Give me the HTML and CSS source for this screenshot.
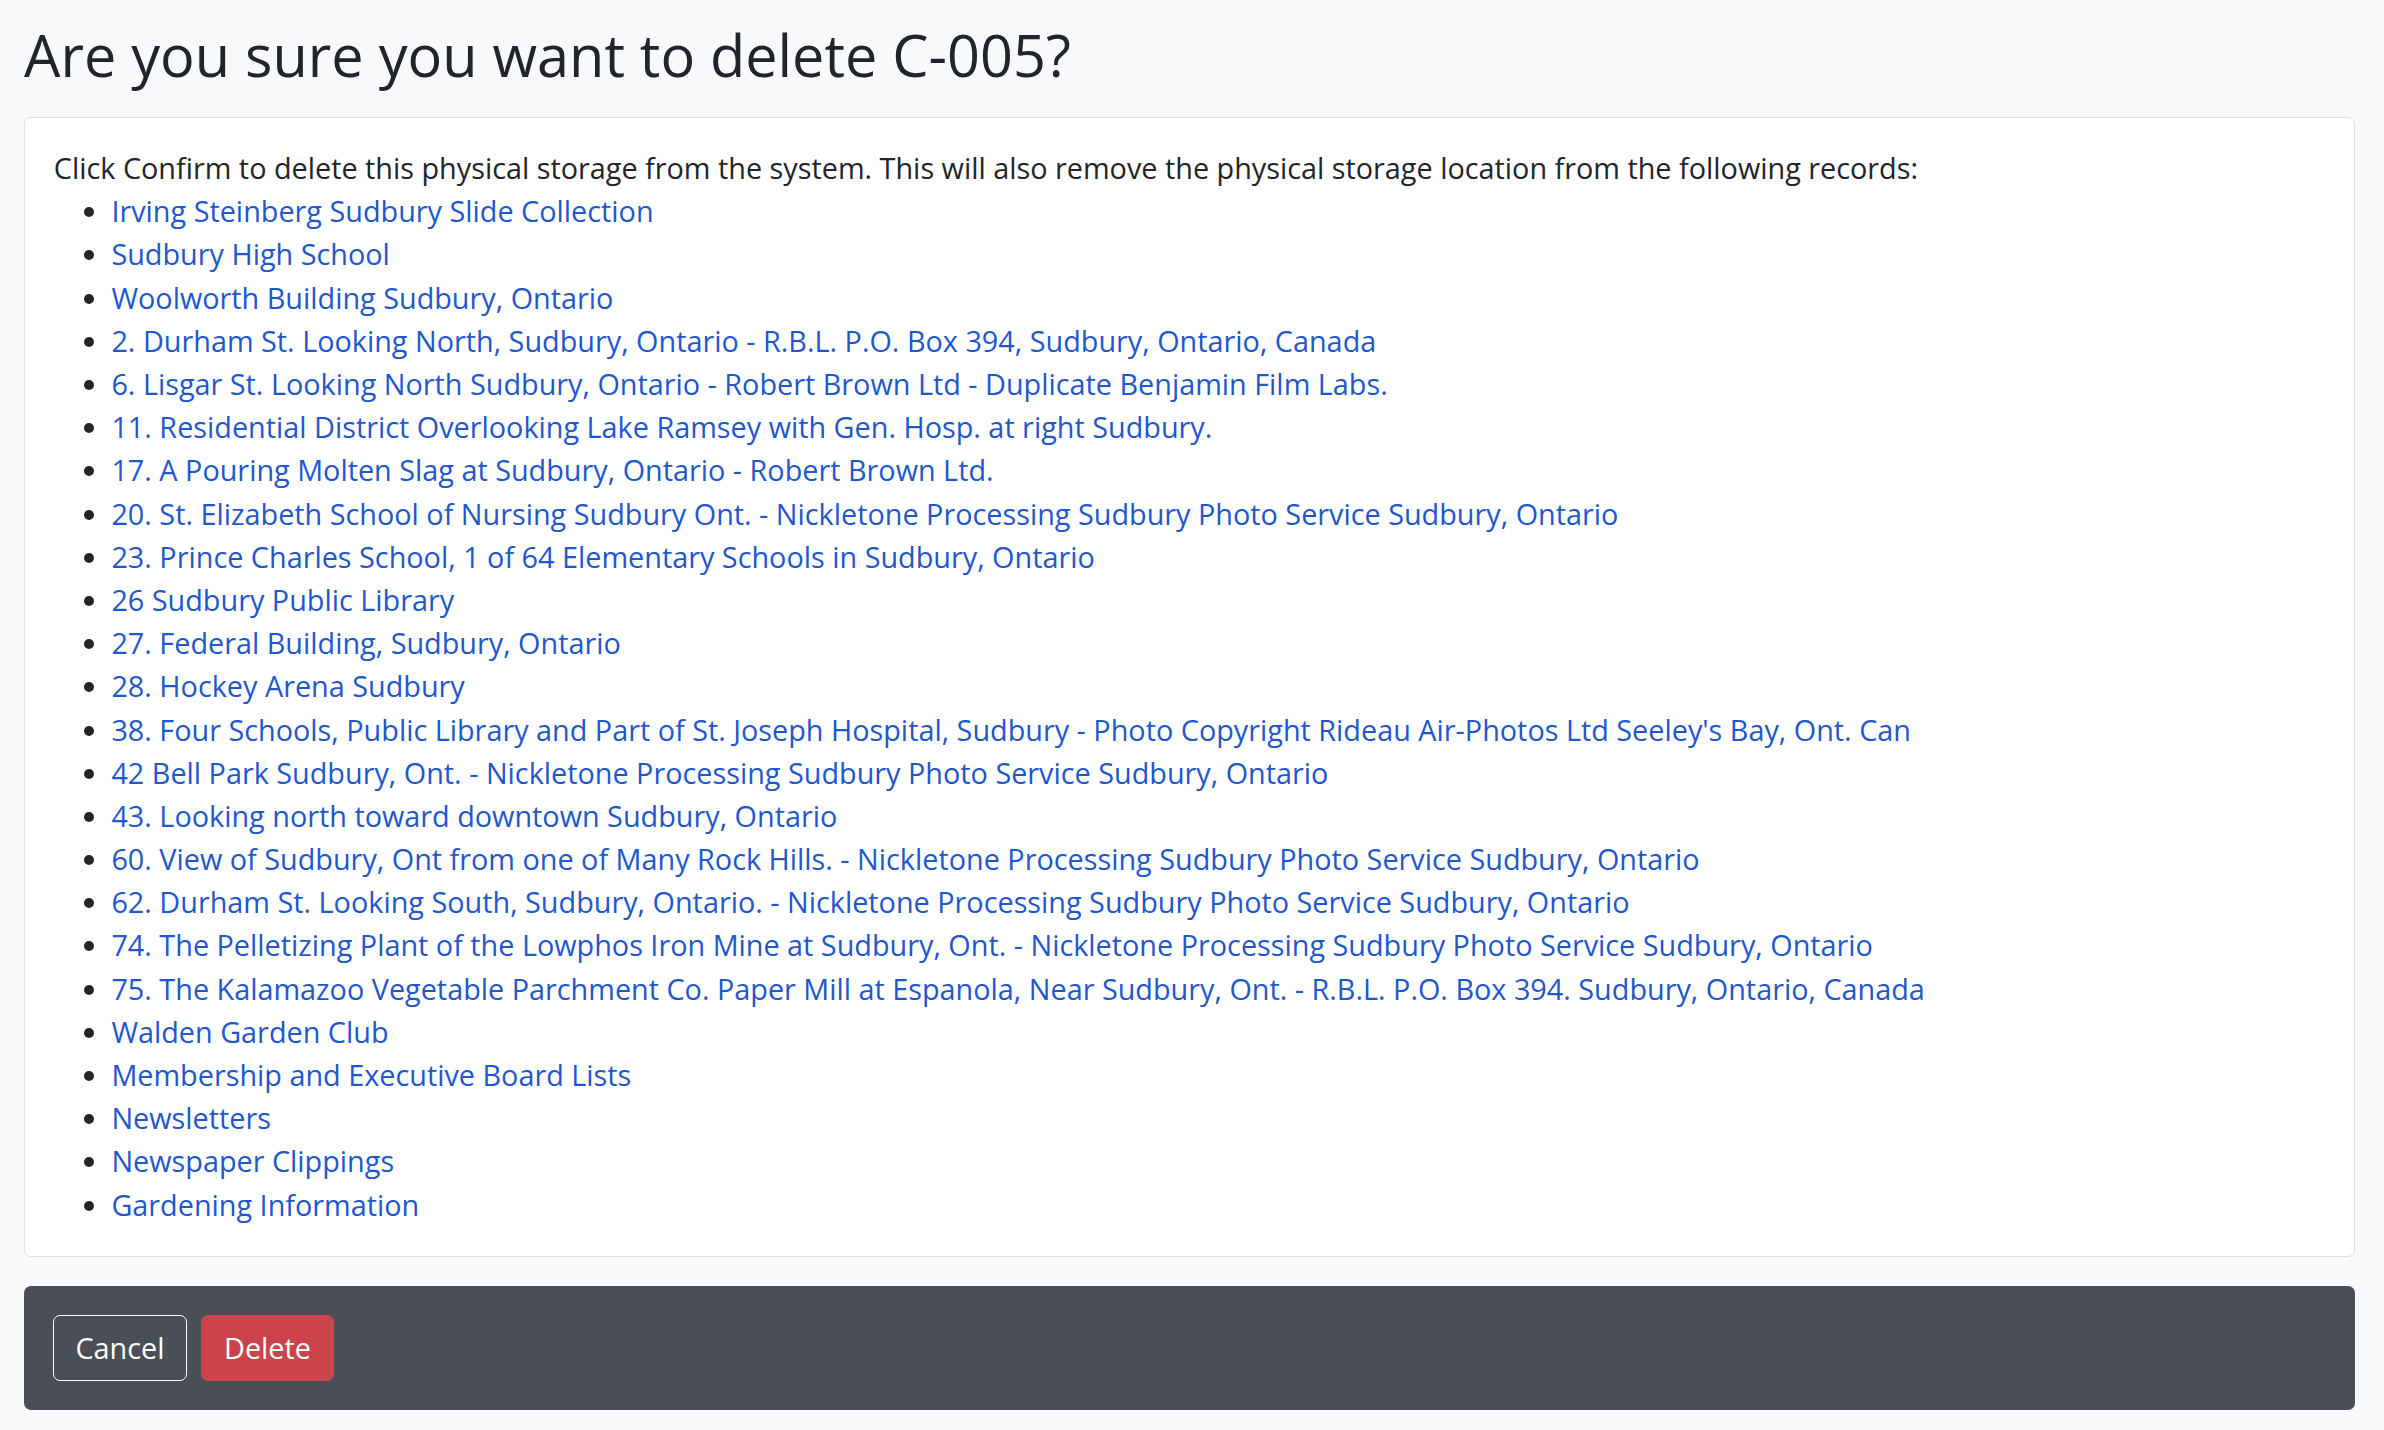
FILE: index.html
```html
<!DOCTYPE html>
<html lang="en">
<head>
    <meta charset="UTF-8">
    <meta name="viewport" content="width=device-width, initial-scale=1.0">
    <title>Delete C-005</title>
    <link rel="stylesheet" href="styles.css">
</head>
<body>
    <div class="page">
        <!-- Heading -->
        <h1 class="title">Are you sure you want to delete C-005?</h1>

        <!-- Affected records -->
        <div class="card">
            <p class="intro">Click Confirm to delete this physical storage from the system. This will also remove the physical storage location from the following records:</p>
            <ul class="records">
                <li><a href="#">Irving Steinberg Sudbury Slide Collection</a></li>
                <li><a href="#">Sudbury High School</a></li>
                <li><a href="#">Woolworth Building Sudbury, Ontario</a></li>
                <li><a href="#">2. Durham St. Looking North, Sudbury, Ontario - R.B.L. P.O. Box 394, Sudbury, Ontario, Canada</a></li>
                <li><a href="#">6. Lisgar St. Looking North Sudbury, Ontario - Robert Brown Ltd - Duplicate Benjamin Film Labs.</a></li>
                <li><a href="#">11. Residential District Overlooking Lake Ramsey with Gen. Hosp. at right Sudbury.</a></li>
                <li><a href="#">17. A Pouring Molten Slag at Sudbury, Ontario - Robert Brown Ltd.</a></li>
                <li><a href="#">20. St. Elizabeth School of Nursing Sudbury Ont. - Nickletone Processing Sudbury Photo Service Sudbury, Ontario</a></li>
                <li><a href="#">23. Prince Charles School, 1 of 64 Elementary Schools in Sudbury, Ontario</a></li>
                <li><a href="#">26 Sudbury Public Library</a></li>
                <li><a href="#">27. Federal Building, Sudbury, Ontario</a></li>
                <li><a href="#">28. Hockey Arena Sudbury</a></li>
                <li><a href="#">38. Four Schools, Public Library and Part of St. Joseph Hospital, Sudbury - Photo Copyright Rideau Air-Photos Ltd Seeley's Bay, Ont. Can</a></li>
                <li><a href="#">42 Bell Park Sudbury, Ont. - Nickletone Processing Sudbury Photo Service Sudbury, Ontario</a></li>
                <li><a href="#">43. Looking north toward downtown Sudbury, Ontario</a></li>
                <li><a href="#">60. View of Sudbury, Ont from one of Many Rock Hills. - Nickletone Processing Sudbury Photo Service Sudbury, Ontario</a></li>
                <li><a href="#">62. Durham St. Looking South, Sudbury, Ontario. - Nickletone Processing Sudbury Photo Service Sudbury, Ontario</a></li>
                <li><a href="#">74. The Pelletizing Plant of the Lowphos Iron Mine at Sudbury, Ont. - Nickletone Processing Sudbury Photo Service Sudbury, Ontario</a></li>
                <li><a href="#">75. The Kalamazoo Vegetable Parchment Co. Paper Mill at Espanola, Near Sudbury, Ont. - R.B.L. P.O. Box 394. Sudbury, Ontario, Canada</a></li>
                <li><a href="#">Walden Garden Club</a></li>
                <li><a href="#">Membership and Executive Board Lists</a></li>
                <li><a href="#">Newsletters</a></li>
                <li><a href="#">Newspaper Clippings</a></li>
                <li><a href="#">Gardening Information</a></li>
            </ul>
        </div>

        <!-- Action bar -->
        <div class="actions">
            <button class="btn btn-cancel">Cancel</button>
            <button class="btn btn-delete">Delete</button>
        </div>
    </div>
</body>
</html>
```

FILE: styles.css
```css
body {
    margin: 0;
    background-color: #f8f9fa;
    font-family: "Open Sans", "Noto Sans", sans-serif;
    font-size: 28.8px;
    line-height: 1.5;
    color: #212529;
}

.page {
    padding: 0 29px 0 24px;
}

/* Heading */
.title {
    margin: 20px 0 28px;
    font-size: 57.6px;
    font-weight: 400;
    line-height: 1.2;
}

/* Records card */
.card {
    background-color: #ffffff;
    border: 1px solid #dcdfe3;
    border-radius: 7px;
    padding: 28px 28.8px 30px;
}

.intro {
    margin: 0;
}

.records {
    margin: 0;
    padding-left: 57.6px;
}

.records a {
    color: #2257cc;
    text-decoration: none;
}

/* Action bar */
.actions {
    display: flex;
    gap: 14.4px;
    margin-top: 29px;
    padding: 28.8px;
    background-color: #4a4f57;
    border-radius: 7px;
}

.btn {
    font-family: inherit;
    font-size: 28.8px;
    line-height: 1.5;
    padding: 10.8px 21.6px;
    border: 1px solid transparent;
    border-radius: 7px;
    color: #ffffff;
    cursor: pointer;
}

.btn-cancel {
    background-color: transparent;
    border-color: #ffffff;
}

.btn-delete {
    background-color: #cc444b;
    border-color: #cc444b;
}
```
